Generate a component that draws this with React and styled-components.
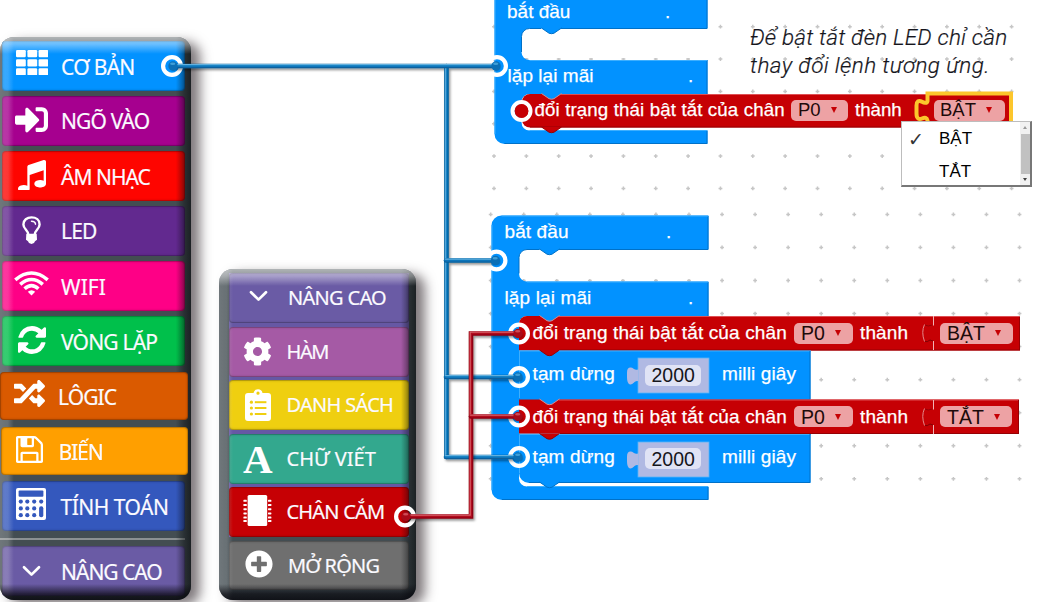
import React from "react";
import styled, { createGlobalStyle, css } from "styled-components";
import { FaSignInAlt, FaRandom, FaCog, FaPlusCircle } from "react-icons/fa";

const GlobalStyle = createGlobalStyle`
  * { box-sizing: border-box; }
  body { margin: 0; background: #fff; overflow: hidden; }
`;

const BLUE = "#0292ff";
const RED = "#c60004";

const Page = styled.main`
  position: relative;
  width: 1041px;
  height: 602px;
  overflow: hidden;
  background: #fff;
`;

/* ---------- toolbox panels ---------- */

const Panel = styled.nav`
  position: absolute;
  left: ${(p) => p.$x}px;
  top: ${(p) => p.$y}px;
  width: ${(p) => p.$w}px;
  height: ${(p) => p.$h}px;
  padding: ${(p) => p.$pad};
  display: flex;
  flex-direction: column;
  border-radius: 14px;
  background: #434d52;
  box-shadow: 9px 5px 12px 0 rgba(50, 40, 45, 0.62);
  &::after {
    content: "";
    position: absolute;
    inset: 0;
    border-radius: inherit;
    pointer-events: none;
    background:
      linear-gradient(to bottom, rgba(255, 255, 255, 0.58) 0, rgba(255, 255, 255, 0.42) 7px, rgba(255, 255, 255, 0) 17px),
      linear-gradient(to top, rgba(8, 8, 14, 0.86) 0, rgba(8, 8, 14, 0.7) 6px, rgba(8, 8, 14, 0) 16px),
      linear-gradient(to left, rgba(8, 10, 12, 0.66) 0, rgba(8, 10, 12, 0.42) 7px, rgba(8, 10, 12, 0) 15px),
      linear-gradient(to right, rgba(255, 255, 255, 0.24) 0, rgba(255, 255, 255, 0.2) 8px, rgba(255, 255, 255, 0) 14px);
  }
`;

const Stack = styled.div`
  display: flex;
  flex-direction: column;
  gap: ${(p) => p.$gap}px;
  background: ${(p) => p.$bg || "transparent"};
`;

const Item = styled.div`
  display: flex;
  align-items: center;
  flex: none;
  height: ${(p) => p.$h || 50}px;
  margin: ${(p) => p.$m || 0};
  background: ${(p) => p.$bg};
  border-radius: 4px;
  box-shadow: inset 0 0 0 1px rgba(0, 0, 0, 0.14), inset 0 0 3px rgba(0, 0, 0, 0.35);
  ${(p) =>
    p.$raised &&
    css`
      position: relative;
      z-index: 1;
    `}
`;

const IconSlot = styled.span`
  flex: none;
  width: ${(p) => p.$w || 59}px;
  margin-bottom: ${(p) => p.$lift || 0}px;
  display: flex;
  justify-content: center;
  color: #fff;
  svg { display: block; }
`;

const ItemText = styled.span`
  flex: none;
  font: ${(p) => p.$size || 21}px/28px "Noto Sans", "Open Sans", sans-serif;
  letter-spacing: ${(p) => p.$ls || 0}px;
  margin-top: ${(p) => p.$dy || 0}px;
  white-space: nowrap;
  color: #fbfaff;
  -webkit-text-stroke: 0.2px #fbfaff;
`;

const SerifLetter = styled.span`
  font: bold 41px/34px "Liberation Serif", serif;
`;

const Divider = styled.div`
  height: 2px;
  margin: 7px 0 6px -2px;
  background: #8b9092;
`;

const GridIcon = () => (
  <svg width="32" height="25" viewBox="0 0 32 25" fill="currentColor">
    {[0, 9.2, 18.2].map((y) =>
      [0, 11.4, 22.6].map((x) => <rect key={`${x}-${y}`} x={x} y={y} width="9.8" height="7.2" rx="1.2" />)
    )}
  </svg>
);

const FontIcon = ({ d, w, h }) => (
  <svg width={w} height={h} viewBox="0 128 1536 1536" preserveAspectRatio="none" fill="currentColor">
    <path d={d} />
  </svg>
);

const MUSIC =
  "M1536 224v1120q0 50-34 89t-86 60.5-103.5 32-96.5 10.5-96.5-10.5-103.5-32-86-60.5-34-89 34-89 86-60.5 103.5-32 96.5-10.5q105 0 192 39v-537l-768 237v709q0 50-34 89t-86 60.5-103.5 32-96.5 10.5-96.5-10.5-103.5-32-86-60.5-34-89 34-89 86-60.5 103.5-32 96.5-10.5q105 0 192 39v-967q0-31 19-56.5t49-35.5l832-256q12-4 28-4 40 0 68 28t28 68z";
const REFRESH =
  "M1511 1056q0 5-1 7-64 268-268 434.5t-478 166.5q-146 0-282.5-55t-243.5-157l-129 129q-19 19-45 19t-45-19-19-45v-448q0-26 19-45t45-19h448q26 0 45 19t19 45-19 45l-137 137q71 66 161 102t187 36q134 0 250-65t186-179q11-17 53-117 8-23 30-23h192q13 0 22.5 9.5t9.5 22.5zm25-800v448q0 26-19 45t-45 19h-448q-26 0-45-19t-19-45 19-45l138-138q-148-137-349-137-134 0-250 65t-186 179q-11 17-53 117-8 23-30 23h-199q-13 0-22.5-9.5t-9.5-22.5v-7q65-268 270-434.5t480-166.5q146 0 284 55.5t245 156.5l130-129q19-19 45-19t45 19 19 45z";
const SAVE =
  "M384 1536h768v-384h-768v384zm896 0h128v-896q0-14-10-38.5t-20-34.5l-281-281q-10-10-34-20t-39-10v416q0 40-28 68t-68 28h-576q-40 0-68-28t-28-68v-416h-128v1280h128v-416q0-40 28-68t68-28h832q40 0 68 28t28 68v416zm-384-928v-320q0-13-9.5-22.5t-22.5-9.5h-192q-13 0-22.5 9.5t-9.5 22.5v320q0 13 9.5 22.5t22.5 9.5h192q13 0 22.5-9.5t9.5-22.5zm640 32v928q0 40-28 68t-68 28h-1344q-40 0-68-28t-28-68v-1344q0-40 28-68t68-28h928q40 0 88 20t76 48l280 280q28 28 48 76t20 88z";

const BulbIcon = () => (
  <svg width="19" height="28" viewBox="0 0 19 28" fill="none" stroke="currentColor">
    <path strokeWidth="2.4" d="M6.300 18.500C6.200 14.500 1.400 13 1.400 8.500C1.400 4 5 1.400 9.500 1.400S17.600 4 17.600 8.500C17.600 13 12.800 14.500 12.700 18.500" />
    <path strokeWidth="1.500" strokeLinecap="round" d="M9.500 5.300C11.700 5.300 13.300 6.300 13.500 8.200" />
    <path fill="currentColor" stroke="none" d="M4.300 17.800h10.400l.3 6-2 1.400-1 1.800-2.500 1-2.500-1-1-1.800-2-1.400z" />
  </svg>
);

const WifiIcon = () => (
  <svg width="35" height="25" viewBox="0 0 35 25" fill="none" stroke="currentColor" strokeWidth="3.6">
    <path d="M1.300 8.800Q17.500-4.800 33.700 8.800" />
    <path d="M6.200 13.400Q17.500 3.600 28.800 13.400" />
    <path d="M10.600 17.800Q17.500 11.400 24.400 17.800" />
    <path d="M13.800 20.800Q17.500 17.800 21.200 20.800L17.500 24.600Z" fill="currentColor" stroke="none" />
  </svg>
);

const CalculatorIcon = () => (
  <svg width="30" height="32" viewBox="0 0 30 32">
    <rect width="30" height="32" rx="2" fill="currentColor" />
    <g fill="#3458bd">
      <rect x="2.600" y="2.400" width="24.800" height="6.400" rx="1" />
      {[13.6, 20.4, 27.2].map((y) =>
        [4.8, 11.3, 18.2].map((x) => <circle key={`${x}-${y}`} cx={x} cy={y} r="2.1" />)
      )}
      <circle cx="25.200" cy="13.600" r="2.100" />
      <rect x="23.100" y="18.300" width="4.200" height="11" rx="2" />
    </g>
  </svg>
);

const ChevronIcon = () => (
  <svg width="19" height="12" viewBox="0 0 19 12" fill="none" stroke="currentColor" strokeWidth="2.700" strokeLinecap="round" strokeLinejoin="round">
    <path d="M2 2.200L9.500 9.600L17 2.200" />
  </svg>
);

const ClipboardIcon = () => (
  <svg width="26" height="32" viewBox="0 0 26 32">
    <path fill="currentColor" fillRule="evenodd" d="M3 4h5.500a4.600 4.600 0 0 1 9 0H23a3 3 0 0 1 3 3v22a3 3 0 0 1-3 3H3a3 3 0 0 1-3-3V7a3 3 0 0 1 3-3zM13 2.600a1.600 1.600 0 1 0 0 3.200 1.600 1.600 0 0 0 0-3.200z" />
    <g fill="#efcf10">
      {[13.2, 19, 25].map((y) => (
        <React.Fragment key={y}>
          <circle cx="6.400" cy={y} r="1.600" />
          <rect x="9.800" y={y - 1} width="11.600" height="2" />
        </React.Fragment>
      ))}
    </g>
  </svg>
);

const ChipIcon = () => (
  <svg width="29" height="31" viewBox="0 0 29 31" fill="currentColor">
    <rect x="4.600" y="0" width="19.600" height="31" rx="1.600" />
    {[4.8, 9, 13.2, 17.4, 21.6, 25].map((y) => (
      <React.Fragment key={y}>
        <rect x="0.400" y={y} width="3.400" height="2" rx="0.600" />
        <rect x="25" y={y} width="3.400" height="2" rx="0.600" />
      </React.Fragment>
    ))}
  </svg>
);

function Category({ icon, label, ls, slot, lift, dy, size, ...rest }) {
  return (
    <Item {...rest}>
      <IconSlot $w={slot} $lift={lift}>{icon}</IconSlot>
      <ItemText $ls={ls} $dy={dy} $size={size}>{label}</ItemText>
    </Item>
  );
}

function MainToolbox() {
  return (
    <Panel $x={0} $y={37} $w={191} $h={563} $pad="4px 6px 0 2px">
      <Stack $gap={5}>
        <Category $bg={BLUE} icon={<GridIcon />} lift={7} dy={1} label="CƠ BẢN" ls={-0.7} />
        <Category $bg="#a6008f" icon={<FaSignInAlt size={33} />} lift={4} label="NGÕ VÀO" ls={-0.85} />
        <Category $bg="#fe0500" icon={<FontIcon d={MUSIC} w={28} h={30} />} lift={2} dy={1} label="ÂM NHẠC" ls={-1} />
        <Category $bg="#62298f" icon={<BulbIcon />} lift={3} label="LED" ls={-0.8} />
        <Category $bg="#fe0086" icon={<WifiIcon />} lift={6} dy={1} label="WIFI" ls={0.1} />
        <Category $bg="#00c04b" icon={<FontIcon d={REFRESH} w={28} h={28} />} lift={2} dy={1} label="VÒNG LẶP" ls={-0.8} />
        <Category $raised $h={48} $m="1px -3px 0 -2px" $bg="#da5a00" icon={<FaRandom size={31} />} slot={58} lift={6} label="LÔGIC" ls={-0.9} dy={2} />
        <Category $raised $h={48} $m="2px -3px 0 -1px" $bg="#ff9f00" icon={<FontIcon d={SAVE} w={27} h={27} />} slot={57.5} lift={3} dy={1} label="BIẾN" ls={-1.1} />
        <Category $m="1px 0 0 0" $bg="#3458bd" icon={<CalculatorIcon />} slot={58.5} lift={4} dy={2} label="TÍNH TOÁN" ls={-0.5} />
      </Stack>
      <Divider />
      <Category $bg="#6a5ba5" icon={<ChevronIcon />} dy={2} label="NÂNG CAO" ls={-1} />
    </Panel>
  );
}

function AdvancedToolbox() {
  return (
    <Panel $x={219} $y={269} $w={197} $h={331} $pad="4px 7px 0 10px">
      <Stack $gap={3.6} $bg="#6658a4">
        <Category $bg="#6a5ba5" icon={<ChevronIcon />} lift={4} size={20} label="NÂNG CAO" ls={-0.7} />
        <Category $bg="#a55aa5" icon={<FaCog size={29} />} slot={57.5} size={20} label="HÀM" ls={-1.4} />
        <Category $bg="#efcf10" icon={<ClipboardIcon />} slot={57.5} size={20} label="DANH SÁCH" ls={-0.7} />
        <Category $bg="#33a88e" icon={<SerifLetter aria-hidden="true">A</SerifLetter>} slot={57.5} size={20} label="CHỮ VIẾT" ls={0} />
        <Category $bg={RED} icon={<ChipIcon />} slot={57.5} lift={3} size={20} label="CHÂN CẮM" ls={-0.8} />
      </Stack>
      <Category $m="4px 0 0" $h={49} $bg="#6f6f6f" icon={<FaPlusCircle size={28} />} lift={3} dy={1} size={20} label="MỞ RỘNG" ls={-0.8} />
    </Panel>
  );
}

/* ---------- workspace ---------- */

const Drawing = styled.svg`
  position: absolute;
  left: 0;
  top: 0;
  pointer-events: none;
`;

const BlockRow = styled.div`
  position: absolute;
  left: ${(p) => p.$x}px;
  top: ${(p) => p.$y}px;
  width: ${(p) => p.$w}px;
  height: ${(p) => p.$h}px;
  display: flex;
  align-items: center;
`;

const Label = styled.span`
  flex: none;
  width: ${(p) => p.$w}px;
  margin-left: ${(p) => p.$ml || 0}px;
  margin-bottom: ${(p) => p.$lift || 0}px;
  font: ${(p) => p.$size || 19}px/24px "Liberation Sans", Arial, sans-serif;
  letter-spacing: ${(p) => p.$ls || 0}px;
  white-space: nowrap;
  color: ${(p) => p.$color || "#fff"};
  -webkit-text-stroke: ${(p) => (p.$color ? 0 : 0.25)}px #fff;
`;

const Field = styled.span`
  flex: none;
  display: flex;
  align-items: center;
  gap: 10px;
  width: ${(p) => p.$w}px;
  height: 21px;
  margin-left: ${(p) => p.$ml || 0}px;
  padding-left: ${(p) => p.$pl || 7}px;
  border-radius: 5px;
  background: ${(p) => p.$bg || "#eda2a4"};
`;

const Arrow = styled.i`
  width: 0;
  height: 0;
  border: 3px solid transparent;
  border-top: 6px solid ${RED};
  border-bottom: 0;
`;

const Caption = styled.p`
  position: absolute;
  left: 750px;
  top: 23px;
  margin: 0;
  font: italic 300 22.5px/28px Roboto, "Open Sans", sans-serif;
  white-space: nowrap;
  color: #15151c;
  -webkit-text-stroke: 0.2px #15151c;
`;

const CaptionLine = styled.span`
  display: block;
  letter-spacing: ${(p) => p.$ls}px;
`;

const Menu = styled.div`
  position: absolute;
  left: 901px;
  top: 121px;
  width: 131px;
  height: 66px;
  display: flex;
  background: #fff;
  border: 1px solid #bdbdbd;
  border-right: 2px solid #777;
  border-bottom: 2px solid #777;
`;

const Options = styled.div`
  flex: 1;
  display: flex;
  flex-direction: column;
`;

const Option = styled.div`
  flex: none;
  height: 33px;
  display: flex;
  align-items: center;
  font: 17px/20px "Liberation Sans", Arial, sans-serif;
  color: #000;
`;

const Check = styled.span`
  width: 37px;
  padding-left: 6px;
  font: bold 19px/20px "DejaVu Sans", sans-serif;
  color: #333;
`;

const Scrollbar = styled.div`
  width: 10px;
  display: flex;
  flex-direction: column;
  align-items: center;
  justify-content: space-between;
  padding: 4px 0;
  background: #f1f1f1;
`;

const Thumb = styled.div`
  width: 9px;
  height: 40px;
  background: #c1c1c1;
`;

const Tip = styled.i`
  border: 2px solid transparent;
  ${(p) => (p.$up ? "border-bottom: 3px solid #999; border-top: 0;" : "border-top: 3px solid #444; border-bottom: 0;")}
`;

const range = (n) => Array.from({ length: n }, (_, i) => i);

function Dots({ x, y, step, rows }) {
  return (
    <g stroke="#c6c6c6" strokeWidth="1.500">
      {range(rows).map((r) =>
        range(17).map((c) => {
          const cx = x + c * step;
          const cy = y + r * step;
          return <path key={`${r}-${c}`} d={`M${cx - 1.9} ${cy}h3.8M${cx} ${cy - 1.9}v3.8`} />;
        })
      )}
    </g>
  );
}

const Tab = ({ x, y, fill, edge }) => (
  <g>
    <path d={`M${x} ${y}h20l-7.5 5.2q-2.5 1-5 0z`} fill={fill} />
    {edge && <path d={`M${x} ${y}l7.5 5.2q2.5 1 5 0l7.5 -5.2`} fill="none" stroke={edge} />}
  </g>
);

function Shapes() {
  return (
    <Drawing width="1041" height="602">
      <Dots x={494} y={26.7} step={32.35} rows={6} />
      <Dots x={490.7} y={214.4} step={33.05} rows={9} />

      {/* upper program */}
      <path fill="#fff" d="M521 28H707V58H521zM521 126H707V131H521z" />
      <path
        fill={BLUE}
        d="M494.500 -5H707.500V28.500H529.500a8 8 0 0 0-8 8V52a8 8 0 0 0 8 8H707.500V94H529.500a8 8 0 0 0-8 8v20.500a8 8 0 0 0 8 8H707.500V144H504.500a10 10 0 0 1-10-10z"
      />
      <path d="M707 0V28.500H561M541 28.500H529.500a8 8 0 0 0-8 8V52M707 60V94M707 130.500V143.500H504.500" fill="none" stroke="#0071c8" />
      <path d="M529.500 60.500H707M529.500 130.500H707M495 0V134" fill="none" stroke="#3dafff" />
      <path fill={RED} d="M530 94H1012V127.500H530a8 8 0 0 1-8-8V102a8 8 0 0 1 8-8z" />
      <path d="M561 94.500H1012" stroke="#df5054" />
      <path d="M530 127H1012" stroke="#960004" />
      <Tab x={541.5} y={28} fill={BLUE} edge="#0071c8" />
      <Tab x={541.5} y={93.5} fill={BLUE} edge="#d88" />
      <Tab x={541.5} y={127} fill={RED} edge="#960004" />
      <path
        d="M1011 126V93.500H927.500V101c-.5 2.500-3.500 2-5.500.8c-3.500-2-5.500-.3-5.500 3.700v8c0 5 2.500 6.500 5.500 5c3-1.500 5-1 5.500 2V126"
        fill="none"
        stroke="#fcc62c"
        strokeWidth="4"
      />

      {/* lower program */}
      <path fill="#fff" d="M519 249H708V279H519zM519 474H708V487H519z" />
      <path
        fill={BLUE}
        d="M501.500 215.500H708.500V249.500H527a8 8 0 0 0-8 8V273.500a8 8 0 0 0 8 8H708.500V316H527a8 8 0 0 0-8 8V478.500a8 8 0 0 0 8 8H708.500V500H502a10.500 10.500 0 0 1-10.500-10.500V225.500a10 10 0 0 1 10-10z"
      />
      <path d="M708 216V249.500H559M539.500 249.500H527a8 8 0 0 0-8 8V273.500M708 282V316M708 487V499.500H502" fill="none" stroke="#0071c8" />
      <path d="M501.500 216H708M527 282H708M527 486.500H708M492 490V225" fill="none" stroke="#3dafff" />
      <path fill={RED} d="M527 316H1020V350.500H519V324a8 8 0 0 1 8-8z" />
      <path fill={BLUE} d="M519 350.500H810.500V400H519zM519 433.500H810.500V483H529a10 10 0 0 1-10-10z" />
      <path fill={RED} d="M519 399.500H1019V433.500H519z" />
      <path d="M559 316.500H1020M559 400H1019" stroke="#df5054" />
      <path d="M560 350H1020M560 433.500H1019M1019.500 317V350M1018.500 400V433" stroke="#960004" />
      <path d="M519.500 398V351H811M519.500 473V434.500H811" fill="none" stroke="#3dafff" />
      <path d="M810 351V399M810 434V482.500H529" fill="none" stroke="#0071c8" />
      <Tab x={539.5} y={249} fill={BLUE} edge="#0071c8" />
      <Tab x={539.5} y={315.5} fill={BLUE} edge="#d88" />
      <Tab x={539.5} y={350} fill={RED} edge="#960004" />
      <Tab x={539.5} y={399} fill={BLUE} edge="#d88" />
      <Tab x={539.5} y={433.5} fill={RED} edge="#960004" />
      <Tab x={539.5} y={482} fill={BLUE} edge="#0071c8" />

      {[316, 400].map((y) => (
        <g key={y} fill="none">
          <path d={`M933.5 ${y}V${y + 9.5}M933.5 ${y + 25}V${y + 34}`} stroke="#f0b4b5" />
          <path d={`M924.5 ${y + 8.5}q-3.500 7.500 0 17`} stroke="#e2898b" />
          <path d={`M925 ${y + 25.5}q2 1 5-1.500l3 1`} stroke="#7f0003" />
          <path d={`M925 ${y + 9}q3 2 7 0`} stroke="#960004" />
        </g>
      ))}
      {[358, 442].map((y) => (
        <g key={y} fill="#b0b9e3">
          <rect x="638" y={y} width="71" height="35" stroke="#55b4fa" strokeWidth="0.800" />
          <path d={`M638.5 ${y + 11}c-3 2.500-5-1.500-8-1.500q-3.500 0-3.500 5v5q0 6 3 7c3.500.5 5-5 8.500-3z`} />
        </g>
      ))}
    </Drawing>
  );
}

const Choice = ({ text, w, ml, size, pl }) => (
  <Field $w={w} $ml={ml} $pl={pl}>
    <Label $size={size} $color="#1d0a0a">{text}</Label>
    <Arrow />
  </Field>
);

const StateRow = ({ y, state, w }) => (
  <BlockRow $x={532.5} $y={y} $w={486} $h={34}>
    <Label $w={254.5} $ls={0.13}>đổi trạng thái bật tắt của chân</Label>
    <Choice text="P0" w={59} ml={7} size={19.5} />
    <Label $w={48} $ml={7} $ls={0.1}>thành</Label>
    <Choice text={state} w={w} ml={32} size={19.5} />
  </BlockRow>
);

const PauseRow = ({ y, lift }) => (
  <BlockRow $x={532.5} $y={y} $w={277} $h={35}>
    <Label $w={82.5} $lift={lift} $ls={0.13}>tạm dừng</Label>
    <Field $w={56.5} $ml={29.5} $bg="#e0e3f5">
      <Label $size={19.5} $color="#16161c">2000</Label>
    </Field>
    <Label $w={75} $ml={21} $lift={lift} $ls={0.13}>milli giây</Label>
  </BlockRow>
);

const HeaderRow = ({ x, y, text, dot, ls }) => (
  <BlockRow $x={x} $y={y} $w={200} $h={26}>
    <Label $w={dot} $ls={ls}>{text}</Label>
    <Label>.</Label>
  </BlockRow>
);

/* ---------- callout wires ---------- */

const BLUE_WIRES = ["M446.5 66V457", "M172 66H496", "M446 260.5H496", "M446 377H519", "M446 457H519"];
const RED_WIRES = ["M404 516.5H471V333.5H519", "M471 416.5H519"];
const RINGS = [
  [172, 66], [497, 66], [496.5, 260.5], [519, 333.5], [519, 377],
  [519, 416.5], [519, 457], [405, 516.5], [521.5, 111],
];
const BLUE_ENDS = [[173, 66], [496, 66], [495.5, 260.5], [518, 377], [518, 457]];
const RED_ENDS = [[518, 333.5], [518, 416.5], [406, 516.5]];

const Wire = ({ d, dark, mid, light }) => (
  <g fill="none" strokeLinecap="round">
    <path d={d} stroke={dark} strokeWidth="4.600" />
    <path d={d} stroke={mid} strokeWidth="2.800" transform="translate(-.3 -.4)" />
    <path d={d} stroke={light} strokeWidth="1.100" transform="translate(-.8 -1.400)" />
  </g>
);

const WireEnds = ({ points, fill, light }) =>
  points.map(([x, y]) => (
    <g key={`${x}-${y}`}>
      <circle cx={x} cy={y} r="4.700" fill={fill} />
      <ellipse cx={x - 0.3} cy={y - 2.3} rx="2.600" ry="1.200" fill={light} />
    </g>
  ));

function Wires() {
  return (
    <Drawing width="1041" height="602">
      <defs>
        <filter id="drop" x="-10%" y="-10%" width="120%" height="120%">
          <feDropShadow dx="1.500" dy="2" stdDeviation="1.300" floodColor="#000" floodOpacity=".4" />
        </filter>
      </defs>
      <g fill="none" stroke="#fff" strokeWidth="4.200">
        {RINGS.map(([x, y]) => <circle key={`${x}-${y}`} cx={x} cy={y} r="8.900" />)}
      </g>
      <g filter="url(#drop)">
        {BLUE_WIRES.map((d) => <Wire key={d} d={d} dark="#075f9c" mid="#0876bb" light="#62b0de" />)}
      </g>
      <g filter="url(#drop)">
        {RED_WIRES.map((d) => <Wire key={d} d={d} dark="#8a0012" mid="#b00a1c" light="#d9646e" />)}
      </g>
      <WireEnds points={BLUE_ENDS} fill="#0b6fb5" light="#3f9fd8" />
      <WireEnds points={RED_ENDS} fill="#a80a18" light="#cf4a55" />
      <circle cx="521.500" cy="111" r="6.900" fill={RED} />
    </Drawing>
  );
}

export default function App() {
  return (
    <Page>
      <GlobalStyle />
      <MainToolbox />
      <AdvancedToolbox />
      <Shapes />

      <HeaderRow x={507} y={-1} text="bắt đầu" dot={158} />
      <HeaderRow x={507.5} y={63} text="lặp lại mãi" dot={180.5} ls={0.05} />
      <BlockRow $x={534.5} $y={93} $w={476} $h={34}>
        <Label $w={250.5} $size={18.7} $ls={0.13}>đổi trạng thái bật tắt của chân</Label>
        <Choice text="P0" w={57} ml={6} size={18.5} />
        <Label $w={47} $ml={7} $size={18.7}>thành</Label>
        <Choice text="BẬT" w={71} ml={31.5} size={18.5} pl={6.5} />
      </BlockRow>
      <Caption>
        <CaptionLine $ls={0.2}>Để bật tắt đèn LED chỉ cần</CaptionLine>
        <CaptionLine $ls={0.38}>thay đổi lệnh tương ứng.</CaptionLine>
      </Caption>

      <HeaderRow x={504.5} y={219} text="bắt đầu" dot={161.5} ls={0.1} />
      <HeaderRow x={504.5} y={285} text="lặp lại mãi" dot={183.5} ls={0.13} />
      <StateRow y={316} state="BẬT" w={72.5} />
      <PauseRow y={357.5} lift={2} />
      <StateRow y={399.5} state="TẮT" w={71.5} />
      <PauseRow y={441} lift={3} />

      <Menu>
        <Options>
          <Option><Check>✓</Check>BẬT</Option>
          <Option><Check />TẮT</Option>
        </Options>
        <Scrollbar><Tip $up /><Thumb /><Tip /></Scrollbar>
      </Menu>
      <Wires />
    </Page>
  );
}
